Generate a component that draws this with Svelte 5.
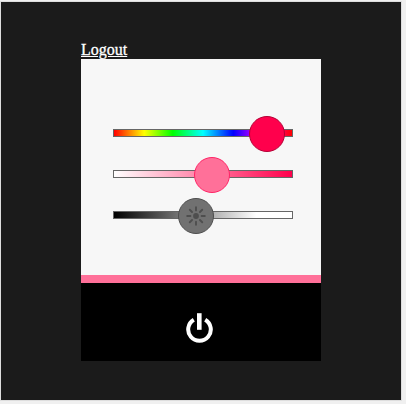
<script>
  const sliders = [
    { name: 'hue', value: 136 },
    { name: 'saturation', value: 81 },
    { name: 'brightness', value: 65 },
  ];
  const rays = [0, 45, 90, 135, 180, 225, 270, 315];
</script>

<div class="page">
  <main class="screen">
    <div class="remote">
      <a class="logout" href="#logout">Logout</a>
      <section class="sliders">
        {#each sliders as slider}
          <div class="track {slider.name}">
            <div class="thumb" style="left: {slider.value - 1}px">
              {#if slider.name === 'brightness'}
                <svg width="20" height="20" viewBox="-10 -10 20 20">
                  <circle r="2.9" fill="#4e4e4e" />
                  {#each rays as angle}
                    <path d="M0-5.6V-8.8" transform="rotate({angle})" stroke="#4e4e4e" stroke-width="1.9" stroke-linecap="round" />
                  {/each}
                </svg>
              {/if}
            </div>
          </div>
        {/each}
      </section>
      <div class="swatch"></div>
      <footer class="power">
        <svg width="28" height="32" viewBox="0 0 28 32" fill="none" stroke="#fff">
          <path d="M8.8 6.7A11.3 11.3 0 1 0 20.2 6.7" stroke-width="4" />
          <path d="M14.3 0.2V16.8" stroke-width="4.6" />
        </svg>
      </footer>
    </div>
  </main>
</div>

<style>
  :global(body) {
    background: #f0f0f0;
  }
  .page {
    box-sizing: border-box;
    height: 404px;
    padding: 1px 4px 3px 0;
    overflow: hidden;
  }
  .screen {
    box-sizing: border-box;
    height: 400px;
    border: 1px solid #dedede;
    background: #1b1b1b;
    padding: 39px 80px 0;
  }
  .remote {
    width: 240px;
    display: flex;
    flex-direction: column;
    align-items: stretch;
  }
  .logout {
    align-self: flex-start;
    height: 18px;
    font: 16px/18px 'Liberation Serif', serif;
    color: #fff;
    text-decoration: underline;
    -webkit-text-stroke: 0.3px #fff;
  }
  .sliders {
    box-sizing: border-box;
    height: 216px;
    padding: 70px 28px 0 32px;
    background: #f7f7f7;
    display: flex;
    flex-direction: column;
    gap: 33px;
  }
  .track {
    position: relative;
    box-sizing: border-box;
    width: 180px;
    height: 8px;
    border: 1px solid #666;
  }
  .hue {
    background: linear-gradient(to right, #f00 0%, #ff0 17%, #0f0 33%, #0ff 50%, #00f 67%, #f0f 83%, #f00 100%);
  }
  .saturation {
    background: linear-gradient(to right, #fff, #ff004c);
  }
  .brightness {
    background: linear-gradient(to right, #000, #fff 80%);
  }
  .thumb {
    position: absolute;
    top: -14px;
    box-sizing: border-box;
    width: 36px;
    height: 36px;
    border: 1px solid #b30035;
    border-radius: 50%;
    background: #ff004c;
    display: flex;
    align-items: center;
    justify-content: center;
  }
  .saturation .thumb {
    background: #ff7099;
    border-color: #ff2466;
  }
  .brightness .thumb {
    background: #717171;
    border-color: #4e4e4e;
  }
  .swatch {
    height: 8px;
    background: #ff7099;
  }
  .power {
    height: 78px;
    background: #000;
    display: flex;
    justify-content: center;
    align-items: flex-start;
    padding: 30px 4px 0 0;
    box-sizing: border-box;
  }
</style>
